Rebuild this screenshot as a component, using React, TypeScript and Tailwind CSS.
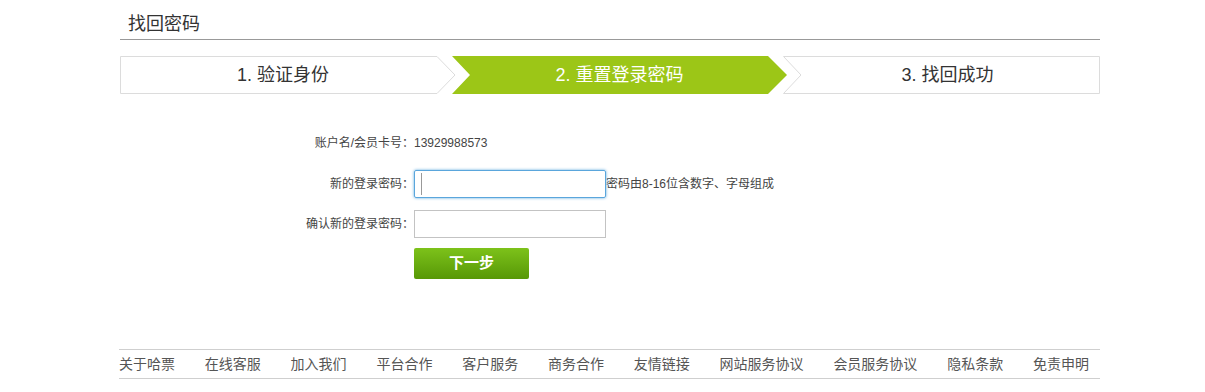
import React from "react";

const font = { fontFamily: '"Liberation Sans", "Noto Sans CJK SC", sans-serif' };

const footerLinks = [
  "关于哈票",
  "在线客服",
  "加入我们",
  "平台合作",
  "客户服务",
  "商务合作",
  "友情链接",
  "网站服务协议",
  "会员服务协议",
  "隐私条款",
  "免责申明",
];

function StepFirst() {
  return (
    <div className="relative h-[38px] w-[336px] shrink-0">
      <svg className="absolute inset-0" width="336" height="38" viewBox="0 0 336 38">
        <path d="M0.5 0.5 H317 L335 19 L317 37.5 H0.5 Z" fill="#fff" stroke="#dcdcdc" />
      </svg>
      <div className="relative flex h-full items-center justify-center pr-[10px] text-[18px] text-[#333]">
        1. 验证身份
      </div>
    </div>
  );
}

function StepActive() {
  return (
    <div className="relative -ml-[4px] h-[38px] w-[335px] shrink-0">
      <svg className="absolute inset-0" width="335" height="38" viewBox="0 0 335 38">
        <path d="M0 0 H316 L335 19 L316 38 H0 L18 19 Z" fill="#9cc617" />
      </svg>
      <div className="relative flex h-full items-center justify-center text-[18px] text-white">
        2. 重置登录密码
      </div>
    </div>
  );
}

function StepLast() {
  return (
    <div className="relative -ml-[4px] h-[38px] w-[317px] shrink-0">
      <svg className="absolute inset-0" width="317" height="38" viewBox="0 0 317 38">
        <path d="M0.5 0.5 H316.5 V37.5 H0.5 L18 19 Z" fill="#fff" stroke="#dcdcdc" />
      </svg>
      <div className="relative flex h-full items-center justify-center pl-[12px] text-[18px] text-[#333]">
        3. 找回成功
      </div>
    </div>
  );
}

export default function App() {
  return (
    <div className="h-[392px] w-full bg-white" style={font}>
      <div className="ml-[120px] w-[980px]">
        {/* title */}
        <div className="flex h-[40px] items-center border-b border-[#999] pl-[8px] pt-[10px] text-[18px] text-[#333]">
          找回密码
        </div>

        {/* steps */}
        <div className="mt-[16px] flex">
          <StepFirst />
          <StepActive />
          <StepLast />
        </div>

        {/* form */}
        <div className="mt-[35px] text-[12px] text-[#444]">
          <div className="flex h-[28px] items-center">
            <span className="w-[294px] text-right">账户名/会员卡号：</span>
            <span>13929988573</span>
          </div>

          <div className="mt-[13px] flex h-[28px] items-center">
            <span className="w-[294px] text-right">新的登录密码：</span>
            <div className="relative h-[28px] w-[192px] rounded-[2px] border border-[#5aa6dc] shadow-[0_0_3px_#5aa6dc]">
              <span className="absolute top-[2px] bottom-[2px] left-[6px] w-px bg-[#999]" />
            </div>
            <span>密码由8-16位含数字、字母组成</span>
          </div>

          <div className="mt-[12px] flex h-[28px] items-center">
            <span className="w-[294px] text-right">确认新的登录密码：</span>
            <div className="h-[28px] w-[192px] border border-[#c3c3c3]" />
          </div>

          <div className="mt-[10px] flex">
            <div className="w-[294px]" />
            <button className="h-[31px] w-[115px] rounded-[2px] bg-gradient-to-b from-[#7dc21a] to-[#579806] text-[15px] font-bold text-white">
              下一步
            </button>
          </div>
        </div>
      </div>

      {/* footer */}
      <div className="mt-[70px] ml-[119px] w-[981px] border-y border-[#cfcfcf]">
        <div className="flex h-[28px] w-[970px] items-center justify-between text-[14px] text-[#555]">
          {footerLinks.map((l) => (
            <span key={l}>{l}</span>
          ))}
        </div>
      </div>
    </div>
  );
}
